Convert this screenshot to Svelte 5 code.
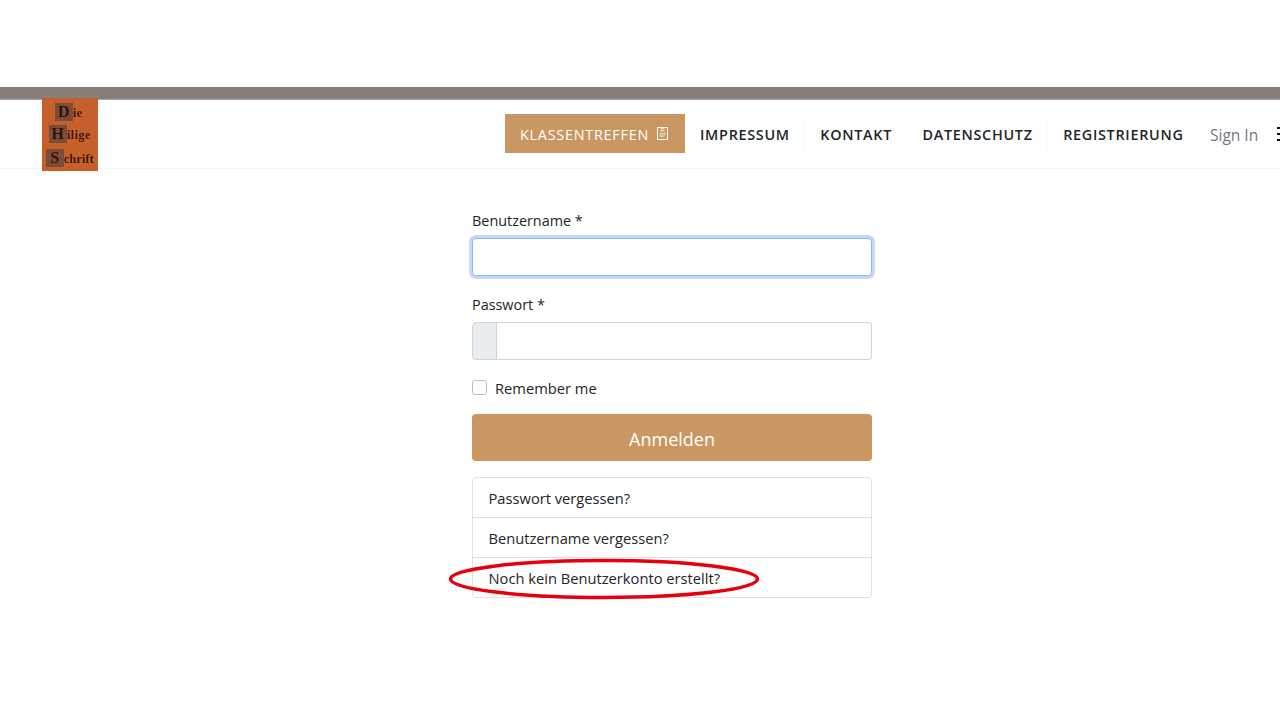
<script>
  const links = ['IMPRESSUM', 'KONTAKT', 'DATENSCHUTZ', 'REGISTRIERUNG'];
  const help = ['Passwort vergessen?', 'Benutzername vergessen?', 'Noch kein Benutzerkonto erstellt?'];
</script>

<div class="page">
  <div class="topspace"></div>
  <div class="bar"></div>
  <header class="head">
    <div class="logo">
      <div class="l1"><span class="cap">D</span>ie</div>
      <div class="l2"><span class="cap">H</span>ilige</div>
      <div class="l3"><span class="cap">S</span>chrift</div>
    </div>
    <nav class="nav">
      <a class="active">KLASSENTREFFEN <span class="tag"><span>FI</span><span>07</span></span></a>
      {#each links as l}
        <a>{l}</a>
      {/each}
    </nav>
    <span class="signin">Sign In</span>
    <svg class="burger" width="6" height="16" viewBox="0 0 6 16"><path d="M0 2h6M0 8h6M0 14h6" stroke="#111" stroke-width="2"/></svg>
  </header>

  <main class="main">
    <form class="form">
      <label class="lbl" for="u">Benutzername *</label>
      <input id="u" class="input focus" type="text" />
      <label class="lbl second" for="p">Passwort *</label>
      <div class="group">
        <span class="addon"></span>
        <input id="p" class="input grp" type="password" />
      </div>
      <label class="check"><span class="box"></span>Remember me</label>
      <button type="button" class="btn">Anmelden</button>
      <ul class="list">
        {#each help as h}
          <li>{h}</li>
        {/each}
      </ul>
      <svg class="ring" width="316" height="46" viewBox="0 0 316 46">
        <ellipse cx="158" cy="23" rx="153.5" ry="18.5" fill="none" stroke="#e6000c" stroke-width="3.5"/>
      </svg>
    </form>
  </main>
</div>

<style>
  :global(body) { margin: 0; background: #fff; }
  .page { width: 1280px; height: 720px; overflow: hidden; font-family: "Open Sans", sans-serif; color: #212529; }
  .topspace { height: 87px; }
  .bar { height: 12px; background: #857e7a; border-bottom: 1px solid #a9a5a2; }
  .head { position: relative; height: 68px; border-bottom: 1px solid #f5f5f5; display: flex; align-items: center; box-sizing: content-box; }
  .logo { position: absolute; left: 42px; top: -2px; width: 56px; height: 73px; background: #c6602a; color: #33190f; font-family: "Liberation Serif", serif; font-weight: 700; font-size: 12px; letter-spacing: 0.5px; line-height: 18px; display: flex; flex-direction: column; z-index: 2; overflow: hidden; filter: blur(0.35px); }
  .cap { display: inline-block; width: 18px; height: 18px; background: #7d4b38; color: #2a140c; font-size: 16px; text-align: center; line-height: 18px; }
  .l1, .l2, .l3 { white-space: nowrap; height: 18px; }
  .l1 { margin: 5px 0 0 13px; }
  .l2 { margin: 4px 0 0 7px; }
  .l3 { margin: 6px 0 0 4px; letter-spacing: 0.2px; }
  .nav { display: flex; align-items: center; margin: -1px 0 0 505px; }
  .nav a { font-size: 14.4px; font-weight: 600; letter-spacing: 0.7px; color: #212529; padding: 2px 14.5px 0 15px; line-height: 37px; white-space: nowrap; border-right: 1px solid #fbfbfb; }
  .nav a.active { background: #ca9763; color: #fff; font-weight: 400; padding: 2px 17px 0 15px; height: 39px; box-sizing: border-box; display: flex; align-items: center; gap: 8px; letter-spacing: 0.75px; border-right: 0; }
  .tag { display: inline-flex; flex-direction: column; width: 11px; height: 13px; border: 1px solid #fff; box-sizing: border-box; font-size: 5px; line-height: 5px; text-align: center; letter-spacing: 0; font-weight: 600; overflow: hidden; margin-top: -3px; }
  .signin { position: absolute; left: 1210px; top: 24px; font-size: 15.5px; line-height: 22px; color: #74778a; }
  .burger { position: absolute; left: 1277px; top: 26px; }
  .main { display: flex; justify-content: center; padding: 40px 0 0 64px; }
  .form { position: relative; width: 400px; display: flex; flex-direction: column; font-size: 14.7px; }
  .lbl { line-height: 24px; height: 22px; margin-bottom: 7px; font-size: 14.4px; }
  .second { margin-top: 17px; margin-bottom: 7px; }
  .input { display: block; height: 38px; border: 1px solid #ced4da; border-radius: 4px; background: #fff; box-sizing: border-box; padding: 0; outline: 0; width: 100%; }
  .focus { border-color: #86b7fe; box-shadow: 0 0 0 3px #c2d9fd; }
  .group { display: flex; height: 38px; }
  .addon { width: 25px; background: #e9ecef; border: 1px solid #ced4da; border-radius: 4px 0 0 4px; box-sizing: border-box; }
  .grp { flex: 1; border-left: 0; border-radius: 0 4px 4px 0; width: auto; min-width: 0; }
  .check { display: flex; align-items: center; gap: 8px; margin-top: 17px; line-height: 22px; height: 22px; }
  .box { width: 15px; height: 15px; border: 1px solid #b9bec4; border-radius: 3px; box-sizing: border-box; background: #fff; margin-top: -2px; }
  .btn { margin-top: 15px; height: 47px; border: 0; border-radius: 4px; background: #ca9763; color: #fff; font-family: inherit; font-size: 18px; padding: 2px 0 0; }
  .list { list-style: none; margin: 16px 0 0; padding: 0; border: 1px solid #e0e0e0; border-radius: 4px; }
  .list li { height: 40px; line-height: 40px; padding-left: 15.5px; border-top: 1px solid #e0e0e0; box-sizing: border-box; }
  .list li:first-child { border-top: 0; height: 39px; }
  .ring { position: absolute; left: -26px; top: 347px; pointer-events: none; }
</style>
